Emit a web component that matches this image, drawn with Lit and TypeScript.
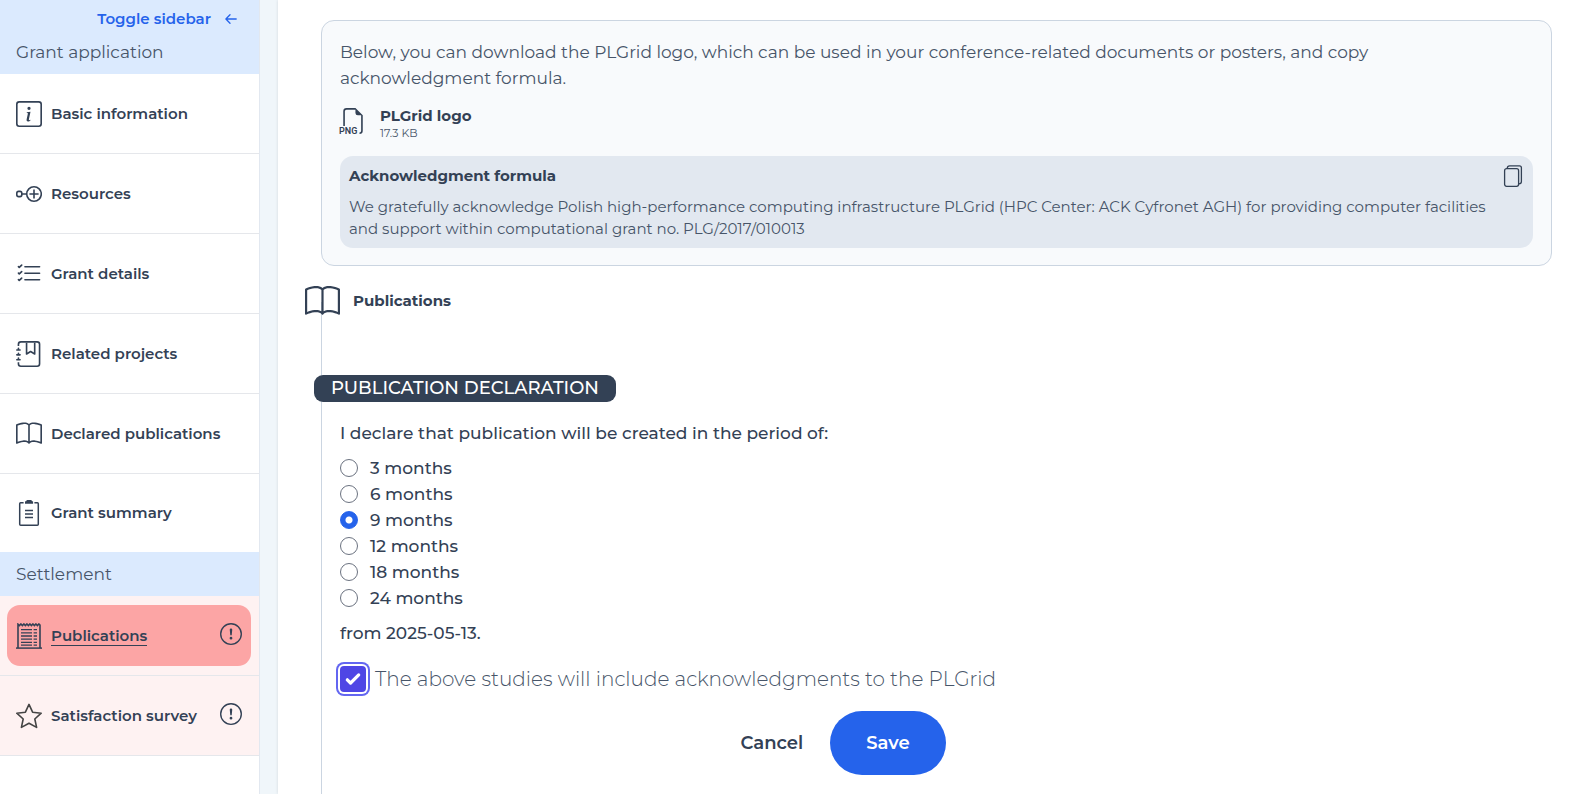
import { LitElement, html, svg, css } from "lit";
import { customElement, state } from "lit/decorators.js";
import { classMap } from "lit/directives/class-map.js";

const bookPath =
  "M1 2.828c.885-.37 2.154-.769 3.388-.893 1.33-.134 2.458.063 3.112.752v9.746c-.935-.53-2.12-.603-3.213-.493-1.18.12-2.37.461-3.287.811V2.828zm7.5-.141c.654-.689 1.782-.886 3.112-.752 1.234.124 2.503.523 3.388.893v9.923c-.918-.35-2.107-.692-3.287-.81-1.094-.111-2.278-.039-3.213.492V2.687zM8 1.783C7.015.936 5.587.81 4.287.94c-1.514.153-3.042.672-3.994 1.105A.5.5 0 0 0 0 2.5v11a.5.5 0 0 0 .707.455c.882-.4 2.303-.881 3.68-1.02 1.409-.142 2.59.087 3.223.877a.5.5 0 0 0 .78 0c.633-.79 1.814-1.019 3.222-.877 1.378.139 2.8.62 3.681 1.02A.5.5 0 0 0 16 13.5v-11a.5.5 0 0 0-.293-.455c-.952-.433-2.48-.952-3.994-1.105C10.413.809 8.985.936 8 1.783z";

const icons: Record<string, unknown> = {
  info: svg`<svg viewBox="0 0 16 16" fill="currentColor" aria-hidden="true"><path d="M14 1a1 1 0 0 1 1 1v12a1 1 0 0 1-1 1H2a1 1 0 0 1-1-1V2a1 1 0 0 1 1-1h12zM2 0a2 2 0 0 0-2 2v12a2 2 0 0 0 2 2h12a2 2 0 0 0 2-2V2a2 2 0 0 0-2-2H2z"/><path d="m8.93 6.588-2.29.287-.082.38.45.083c.294.07.352.176.288.469l-.738 3.468c-.194.897.105 1.319.808 1.319.545 0 1.178-.252 1.465-.598l.088-.416c-.2.176-.492.246-.686.246-.275 0-.375-.193-.304-.533L8.93 6.588zM9 4.5a1 1 0 1 1-2 0 1 1 0 0 1 2 0z"/></svg>`,
  resources: svg`<svg viewBox="0 0 26 26" fill="none" stroke="currentColor" stroke-width="1.6" aria-hidden="true"><rect x="0.8" y="10.4" width="5" height="5.2" rx="1.8"/><path d="M5.8 13H10.4M18 8.4V17.6M13.4 13H22.6"/><circle cx="18" cy="13" r="7.3"/></svg>`,
  checks: svg`<svg viewBox="0 0 16 16" fill="currentColor" aria-hidden="true"><path d="M5 11.5a.5.5 0 0 1 .5-.5h9a.5.5 0 0 1 0 1h-9a.5.5 0 0 1-.5-.5zm0-4a.5.5 0 0 1 .5-.5h9a.5.5 0 0 1 0 1h-9a.5.5 0 0 1-.5-.5zm0-4a.5.5 0 0 1 .5-.5h9a.5.5 0 0 1 0 1h-9a.5.5 0 0 1-.5-.5zM3.854 2.146a.5.5 0 0 1 0 .708l-1.5 1.5a.5.5 0 0 1-.708 0l-.5-.5a.5.5 0 1 1 .708-.708L2 3.293l1.146-1.147a.5.5 0 0 1 .708 0zm0 4a.5.5 0 0 1 0 .708l-1.5 1.5a.5.5 0 0 1-.708 0l-.5-.5a.5.5 0 1 1 .708-.708L2 7.293l1.146-1.147a.5.5 0 0 1 .708 0zm0 4a.5.5 0 0 1 0 .708l-1.5 1.5a.5.5 0 0 1-.708 0l-.5-.5a.5.5 0 0 1 .708-.708l.146.147 1.146-1.147a.5.5 0 0 1 .708 0z"/></svg>`,
  journal: svg`<svg viewBox="0 0 16 16" fill="currentColor" aria-hidden="true"><path d="M6 8V1h1v6.117L8.743 6.07a.5.5 0 0 1 .514 0L11 7.117V1h1v7a.5.5 0 0 1-.757.429L9 7.083 6.757 8.43A.5.5 0 0 1 6 8z"/><path d="M3 0h10a2 2 0 0 1 2 2v12a2 2 0 0 1-2 2H3a2 2 0 0 1-2-2v-1h1v1a1 1 0 0 0 1 1h10a1 1 0 0 0 1-1V2a1 1 0 0 0-1-1H3a1 1 0 0 0-1 1v1H1V2a2 2 0 0 1 2-2z"/><path d="M1 5v-.5a.5.5 0 0 1 1 0V5h.5a.5.5 0 0 1 0 1h-2a.5.5 0 0 1 0-1H1zm0 3v-.5a.5.5 0 0 1 1 0V8h.5a.5.5 0 0 1 0 1h-2a.5.5 0 0 1 0-1H1zm0 3v-.5a.5.5 0 0 1 1 0v.5h.5a.5.5 0 0 1 0 1h-2a.5.5 0 0 1 0-1H1z"/></svg>`,
  book: svg`<svg viewBox="0 0 16 16" fill="currentColor" aria-hidden="true"><path d=${bookPath}/></svg>`,
  clipboard: svg`<svg viewBox="0 0 26 26" fill="none" stroke="currentColor" stroke-width="1.5" aria-hidden="true"><path d="M7.6 2.7H4.6Q3.7 2.7 3.7 3.7V24.2Q3.7 25.2 4.7 25.2H21.3Q22.3 25.2 22.3 24.2V3.7Q22.3 2.7 21.4 2.7H18.4"/><path d="M9 3.8V1.6Q9 1.2 9.5 1.2H10.2Q10.4 0 11.4 0H14.8Q15.8 0 16 1.2H16.7Q17.1 1.2 17.1 1.6V3.8Z" fill="currentColor" stroke="none"/><path d="M9 10.5H17M9 14H17M9 17.5H17" stroke-width="1.5"/></svg>`,
  paper: svg`<svg viewBox="0 0 26 26" fill="none" stroke="currentColor" aria-hidden="true"><path d="M2 25V1.2L3.4 2.6 4.9 1 6.4 2.6 7.9 1 9.4 2.6 10.9 1 12.4 2.6 13.9 1 15.4 2.6 16.9 1 18.4 2.6 19.9 1 21.4 2.6 22.9 1 24 2V25" stroke-width="1.6"/><path d="M0 25.1H26" stroke-width="1.5"/><path d="M5 6.6H16M5 9.8H16M5 13H16M5 16.2H16M5 19.4H16M5 22.2H16" stroke-width="1.3"/><path d="M17.6 6.6H21M17.6 9.8H21M17.6 13H21M17.6 16.2H21M17.6 19.4H21M17.6 22.2H21" stroke-width="1.3"/></svg>`,
  star: svg`<svg viewBox="0 0 26 26" fill="none" stroke="#444" stroke-width="1.6" stroke-linejoin="round" aria-hidden="true"><path d="M13 1.4L16.6 9.2L25.2 10.2L18.8 16L20.6 24.4L13 20.2L5.4 24.4L7.2 16L0.8 10.2L9.4 9.2Z"/></svg>`,
  alert: svg`<svg viewBox="0 0 16 16" fill="currentColor" aria-hidden="true"><path d="M8 15A7 7 0 1 1 8 1a7 7 0 0 1 0 14zm0 1A8 8 0 1 0 8 0a8 8 0 0 0 0 16z"/><path d="M7.002 11a1 1 0 1 1 2 0 1 1 0 0 1-2 0zM7.1 4.995a.905.905 0 1 1 1.8 0l-.35 3.507a.552.552 0 0 1-1.1 0L7.1 4.995z"/></svg>`,
  arrow: svg`<svg viewBox="0 0 12 12" fill="none" stroke="currentColor" stroke-width="1.3" stroke-linecap="round" stroke-linejoin="round" aria-hidden="true"><path d="M11.2 6H1M5 1.8L0.9 6L5 10.2"/></svg>`,
  copy: svg`<svg viewBox="0 0 22 22" fill="none" stroke="currentColor" stroke-width="1.3" aria-hidden="true"><rect x="2.6" y="3.7" width="14" height="17.6" rx="2"/><path d="M5.2 3.4Q5.4 0.8 7.6 0.8H17.4Q19.4 0.8 19.4 2.8V16.4Q19.4 18.6 17 18.8"/></svg>`,
  png: svg`<svg viewBox="0 0 26 26" fill="currentColor" aria-hidden="true"><path transform="scale(1.625)" d="M14 4.5V14a2 2 0 0 1-2 2v-1a1 1 0 0 0 1-1V4.5h-2A1.5 1.5 0 0 1 9.5 3V1H4a1 1 0 0 0-1 1v9H2V2a2 2 0 0 1 2-2h5.5L14 4.5Z"/><text x="-1" y="26" font-family="Roboto, sans-serif" font-size="9" font-weight="600">PNG</text></svg>`,
};

interface NavItem {
  label: string;
  icon: string;
  alert?: boolean;
  active?: boolean;
}

const applicationItems: NavItem[] = [
  { label: "Basic information", icon: "info" },
  { label: "Resources", icon: "resources" },
  { label: "Grant details", icon: "checks" },
  { label: "Related projects", icon: "journal" },
  { label: "Declared publications", icon: "book" },
  { label: "Grant summary", icon: "clipboard" },
];

const settlementItems: NavItem[] = [
  { label: "Publications", icon: "paper", alert: true, active: true },
  { label: "Satisfaction survey", icon: "star", alert: true },
];

@customElement("grant-sidebar")
class GrantSidebar extends LitElement {
  static styles = css`
    :host {
      display: block;
      box-sizing: border-box;
      background: #fff;
      border-right: 1px solid #e2e8f0;
    }
    .top {
      display: flex;
      flex-direction: column;
      justify-content: flex-end;
      background: #dbeafe;
    }
    .toggle {
      display: flex;
      align-items: center;
      justify-content: flex-end;
      gap: 14px;
      padding: 8px 22px 8px 16px;
      border: 0;
      background: none;
      color: #2563eb;
      font: 600 15px/22px Montserrat, Inter, sans-serif;
    }
    .toggle svg {
      width: 12px;
      height: 12px;
    }
    h2 {
      margin: 0;
      padding: 9px 16px;
      background: #dbeafe;
      color: #475569;
      font: 400 17px/26px Montserrat, Inter, sans-serif;
    }
    .top h2 {
      padding-top: 1px;
    }
    ul {
      margin: 0;
      padding: 0;
      list-style: none;
    }
    li {
      display: flex;
      min-height: 79px;
      border-bottom: 1px solid #e5e7eb;
    }
    .group li:last-child {
      min-height: 78px;
      border-bottom: 0;
    }
    .alert {
      background: #fef2f2;
    }
    a {
      display: flex;
      flex: 1;
      align-items: center;
      gap: 9px;
      margin: 9px 8px 9px 7px;
      padding: 0 9px;
      border-radius: 13px;
      color: #334155;
      font: 600 15px/22px Montserrat, Inter, sans-serif;
      text-decoration: none;
    }
    a svg {
      width: 26px;
      height: 26px;
      flex: none;
    }
    .label {
      flex: 1;
    }
    .badge {
      display: flex;
      padding-bottom: 4px;
    }
    .badge svg {
      width: 22px;
      height: 22px;
    }
    .active {
      background: #fca5a5;
    }
    .active .label span {
      border-bottom: 1px solid currentColor;
    }
  `;

  private renderItem(item: NavItem) {
    return html`<li class=${classMap({ alert: !!item.alert })}>
      <a href="#" class=${classMap({ active: !!item.active })}>
        ${icons[item.icon]}
        <span class="label"><span>${item.label}</span></span>
        ${item.alert ? html`<span class="badge">${icons.alert}</span>` : ""}
      </a>
    </li>`;
  }

  render() {
    return html`
      <div class="top">
        <button class="toggle" type="button">Toggle sidebar ${icons.arrow}</button>
        <h2>Grant application</h2>
      </div>
      <ul class="group">
        ${applicationItems.map((i) => this.renderItem(i))}
      </ul>
      <h2>Settlement</h2>
      <ul>
        ${settlementItems.map((i) => this.renderItem(i))}
      </ul>
    `;
  }
}

@customElement("app-root")
class AppRoot extends LitElement {
  @state() private period = 9;
  @state() private acknowledged = true;

  static styles = css`
    :host {
      display: flex;
      min-height: 100vh;
      background: #f0f6fa;
      color: #334155;
      font: 400 17px/26px Montserrat, Inter, sans-serif;
    }
    grant-sidebar {
      flex: 0 0 260px;
    }
    main {
      display: flex;
      flex: 1;
      flex-direction: column;
      min-width: 0;
      margin-left: 18px;
      padding: 20px 19px 0 43px;
      background: #fff;
      box-shadow: 0 0 3px rgba(0, 0, 0, 0.12);
    }
    .card {
      padding: 18px 18px 17px;
      border: 1px solid #cbd5e1;
      border-radius: 13px;
      background: #f8fafc;
      color: #475569;
    }
    p {
      margin: 0;
    }
    .file {
      display: flex;
      align-items: center;
      gap: 14px;
      margin: 16px 0 15px;
      color: #334155;
      text-decoration: none;
    }
    .file svg {
      width: 26px;
      height: 26px;
      margin-bottom: 6px;
      overflow: visible;
    }
    .file-name {
      display: block;
      font-size: 15px;
      font-weight: 700;
      line-height: 18px;
    }
    .file-size {
      display: block;
      color: #475569;
      font-size: 11px;
      line-height: 16px;
    }
    .formula {
      padding: 9px 9px 8px;
      border-radius: 13px;
      background: #e2e8f0;
      font-size: 15px;
      line-height: 22px;
    }
    .formula-head {
      display: flex;
      justify-content: space-between;
      margin-bottom: 9px;
    }
    h3 {
      margin: 0;
      color: #334155;
      font-size: 15px;
      font-weight: 700;
      line-height: 22px;
    }
    .copy {
      display: flex;
      padding: 0;
      border: 0;
      background: none;
      color: #334155;
    }
    .copy svg {
      width: 22px;
      height: 22px;
    }
    .section {
      flex: 1;
      margin-top: 36px;
      padding: 0 18px 19px;
      border-left: 1px solid #cbd5e1;
    }
    .section-head {
      display: flex;
      align-items: center;
      gap: 13px;
      height: 36px;
      margin: -19px 0 56px -35px;
    }
    .section-head svg {
      width: 35px;
      height: 35px;
    }
    fieldset {
      display: block;
      min-width: 0;
      margin: 0;
      padding: 0;
      border: 0;
    }
    legend {
      margin-left: -26px;
      padding: 0 17px;
      border-radius: 9px;
      background: #334155;
      color: #fff;
      font-size: 18px;
      font-weight: 500;
      line-height: 27px;
      text-transform: uppercase;
    }
    .declare {
      padding: 18px 0 9px;
      font-weight: 500;
    }
    .option {
      display: flex;
      align-items: center;
      gap: 12px;
      width: fit-content;
      font-weight: 500;
    }
    input {
      flex: none;
      appearance: none;
      box-sizing: border-box;
      margin: 0;
    }
    .option input {
      display: grid;
      place-items: center;
      width: 18px;
      height: 18px;
      border: 1px solid #6b7280;
      border-radius: 50%;
      background: #fff;
    }
    .option input:checked {
      border-color: #2563eb;
      background: radial-gradient(circle, #fff 0 3px, #2563eb 4px);
    }
    .from {
      margin: 9px 0 20px;
      font-weight: 500;
    }
    .confirm {
      display: flex;
      align-items: center;
      gap: 9px;
      width: fit-content;
      color: #475569;
      font-size: 20px;
      font-weight: 300;
    }
    .box {
      display: grid;
    }
    .box > * {
      grid-area: 1 / 1;
      width: 26px;
      height: 26px;
    }
    .box svg {
      visibility: hidden;
      pointer-events: none;
    }
    .box input {
      border: 1px solid #6b7280;
      border-radius: 4px;
      background: #fff;
    }
    .box input:checked {
      border: 0;
      background: #4f46e5;
      box-shadow: 0 0 0 2px #fff, 0 0 0 4px #6366f1;
    }
    .box input:checked + svg {
      visibility: visible;
    }
    .actions {
      display: flex;
      justify-content: center;
      gap: 9px;
      max-width: 988px;
      margin-top: 19px;
    }
    .actions button {
      padding: 0 18px;
      border: 0;
      border-radius: 32px;
      background: none;
      color: #334155;
      font: 600 18px/64px Montserrat, Inter, sans-serif;
    }
    .actions .save {
      padding: 0 36px;
      background: #2563eb;
      color: #fff;
    }
  `;

  render() {
    return html`
      <grant-sidebar></grant-sidebar>
      <main>
        <div class="card">
          <p>
            Below, you can download the PLGrid logo, which can be used in your conference-related documents or posters, and copy<br />
            acknowledgment formula.
          </p>
          <a class="file" href="#">
            ${icons.png}
            <span>
              <span class="file-name">PLGrid logo</span>
              <span class="file-size">17.3 KB</span>
            </span>
          </a>
          <div class="formula">
            <div class="formula-head">
              <h3>Acknowledgment formula</h3>
              <button class="copy" type="button" aria-label="Copy">${icons.copy}</button>
            </div>
            <p>
              We gratefully acknowledge Polish high-performance computing infrastructure PLGrid (HPC Center: ACK Cyfronet AGH) for providing computer facilities<br />
              and support within computational grant no. PLG/2017/010013
            </p>
          </div>
        </div>
        <form class="section">
          <div class="section-head">
            ${icons.book}
            <h3>Publications</h3>
          </div>
          <fieldset>
            <legend>Publication declaration</legend>
            <p class="declare">I declare that publication will be created in the period of:</p>
            ${[3, 6, 9, 12, 18, 24].map(
              (n) => html`<label class="option">
                <input type="radio" name="period" value=${n} .checked=${this.period === n} @change=${() => (this.period = n)} />
                ${n} months
              </label>`
            )}
            <p class="from">from 2025-05-13.</p>
          </fieldset>
          <label class="confirm">
            <span class="box">
              <input
                type="checkbox"
                .checked=${this.acknowledged}
                @change=${(e: Event) => (this.acknowledged = (e.target as HTMLInputElement).checked)}
              />
              <svg viewBox="0 0 16 16" fill="#fff" aria-hidden="true">
                <path d="M12.207 4.793a1 1 0 0 1 0 1.414l-5 5a1 1 0 0 1-1.414 0l-2-2a1 1 0 0 1 1.414-1.414L6.5 9.086l4.293-4.293a1 1 0 0 1 1.414 0z" />
              </svg>
            </span>
            The above studies will include acknowledgments to the PLGrid
          </label>
          <div class="actions">
            <button type="button">Cancel</button>
            <button class="save" type="button">Save</button>
          </div>
        </form>
      </main>
    `;
  }
}
